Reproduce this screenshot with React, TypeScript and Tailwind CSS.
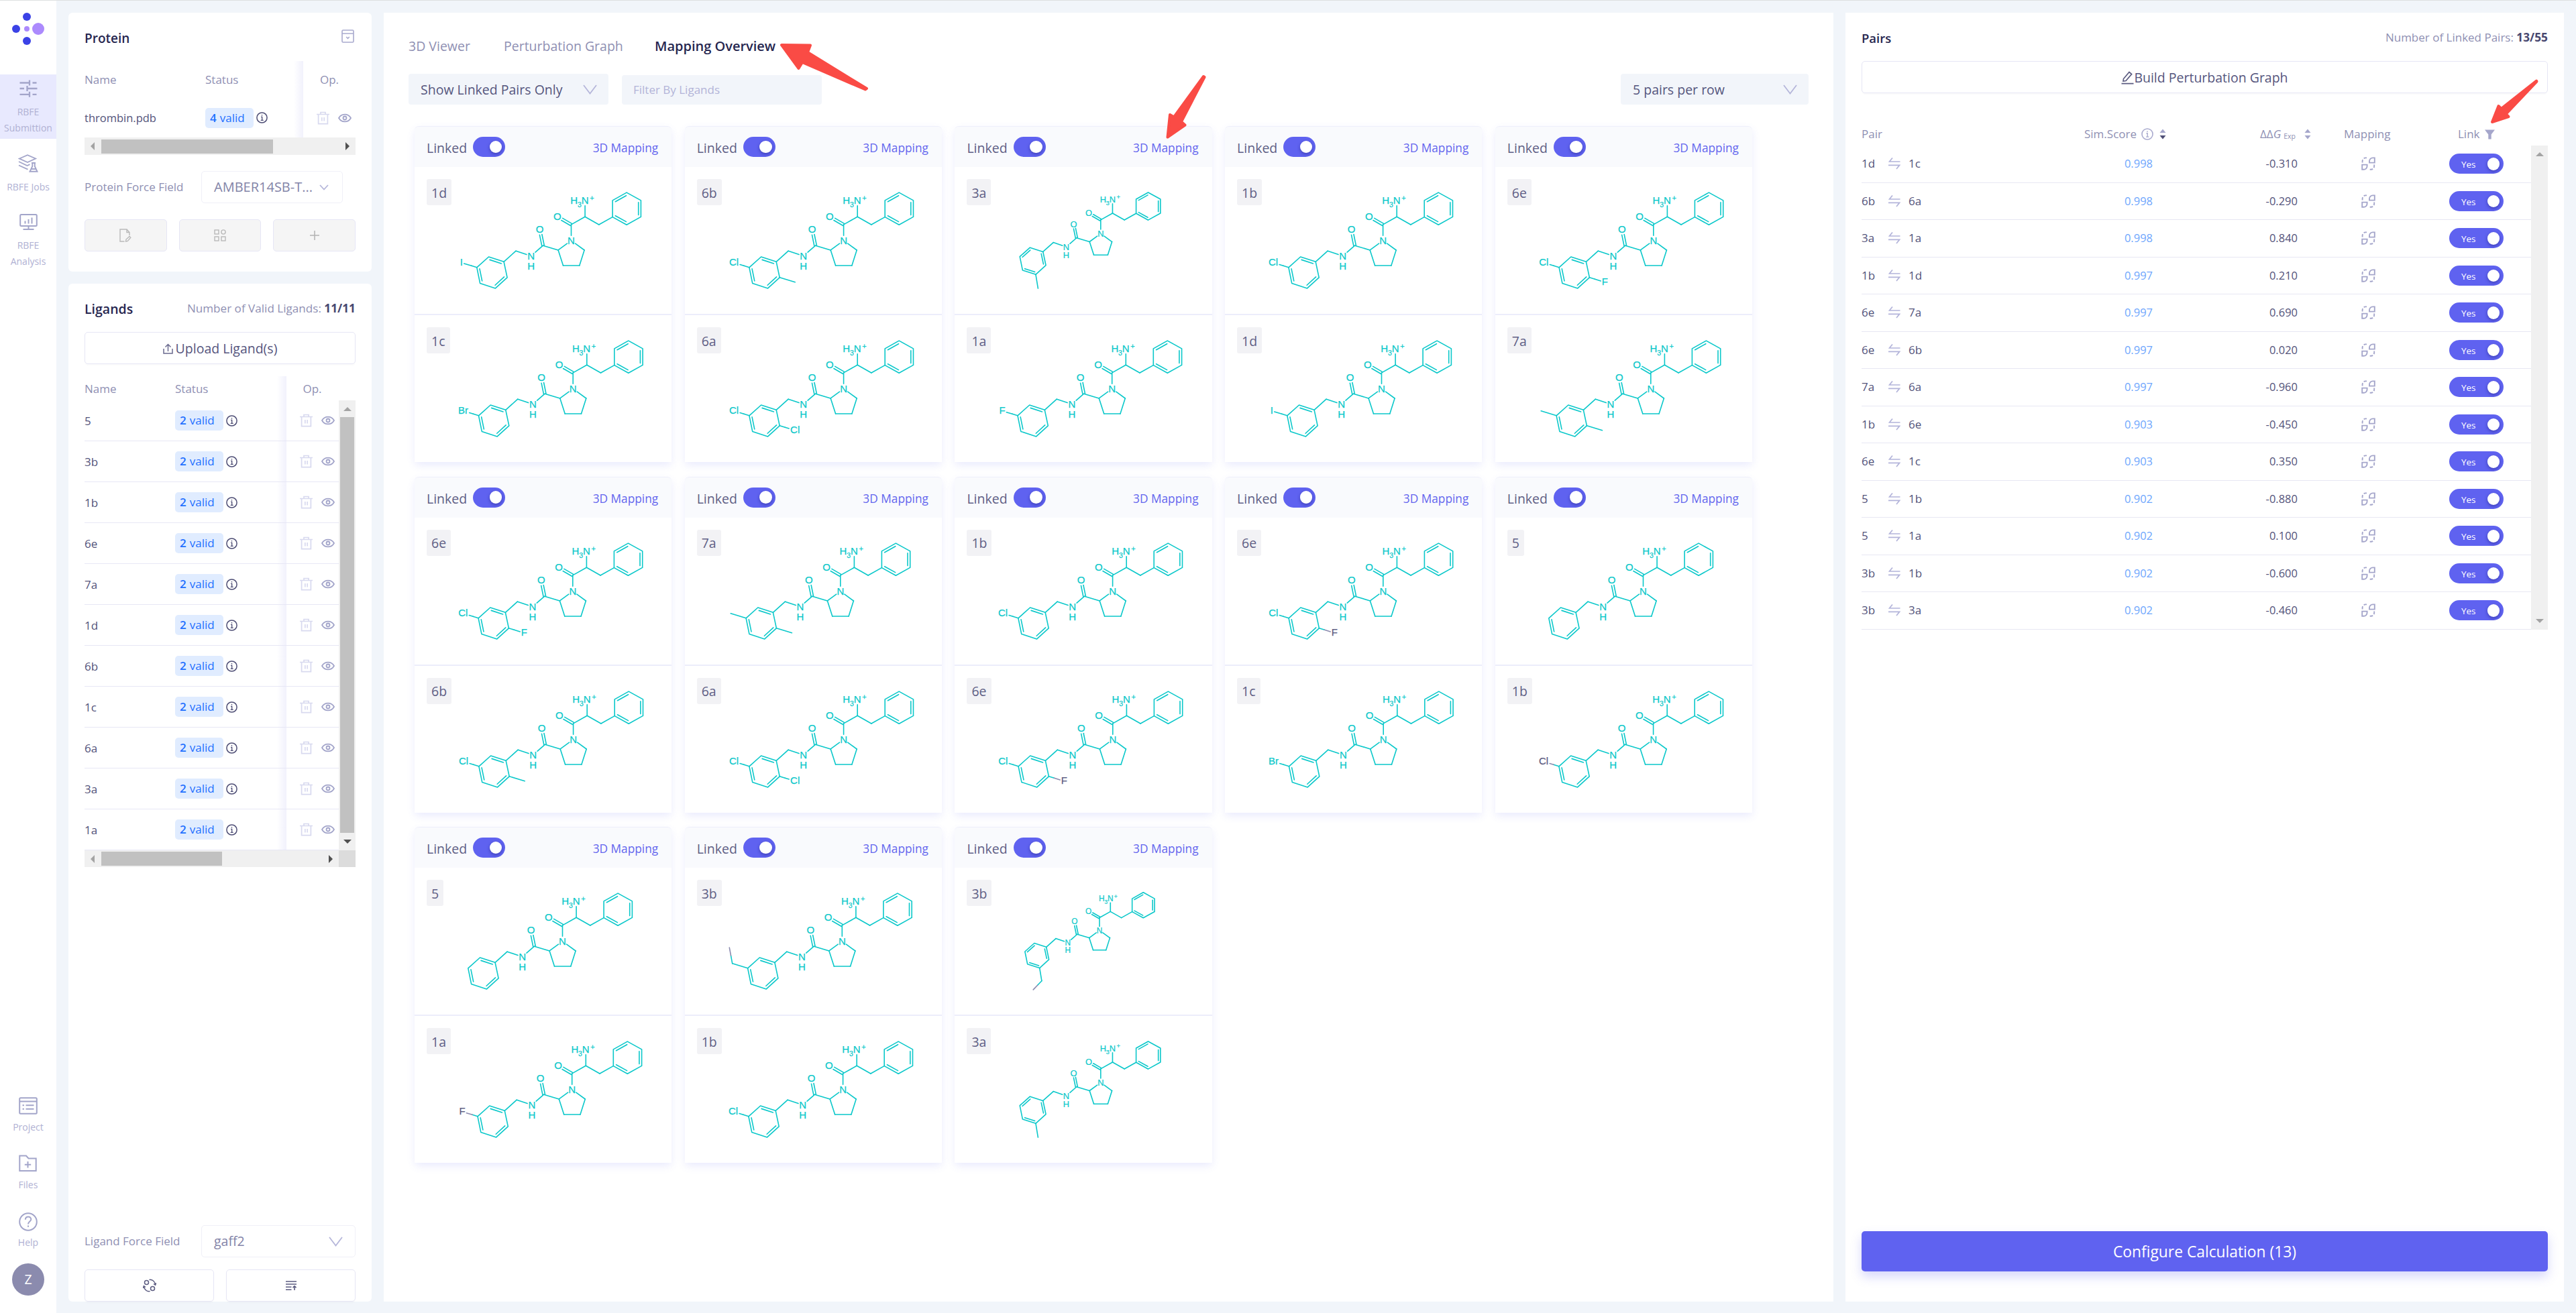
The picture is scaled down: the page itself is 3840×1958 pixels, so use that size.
import type { ReactNode } from "react";
import clsx from "clsx";

/* ---------- molecules ---------- */

type Pt = [number, number];

const TEAL = "#0bc8ca";
const GREY = "#8a8aae";

// 2D coordinates, relative to the pyrrolidine nitrogen
const phenyl: Pt[] = [
  [82.6, -71.7],
  [61.6, -59.9],
  [61.6, -35.2],
  [82.6, -23.6],
  [103.9, -35.4],
  [103.9, -59.9],
];
const ring: Pt[] = [
  [-100.4, 31.5],
  [-123, 24.2],
  [-140.7, 40],
  [-135.9, 63.6],
  [-113, 71.1],
  [-95.4, 55],
];
const N: Pt = [0, 0];
const C2: Pt = [-19.4, 14.1];
const C3: Pt = [-12, 37.2];
const C4: Pt = [12.3, 37.2];
const C5: Pt = [19.6, 14.2];
const CO: Pt = [0, -23.9];
const O1: Pt = [-20.7, -35.8];
const CA: Pt = [20.6, -35.5];
const CB: Pt = [41.3, -23.8];
const NH3: Pt = [20.6, -60];
const CO2: Pt = [-42, 7.4];
const O2: Pt = [-47, -16.8];
const NH: Pt = [-59.9, 23];
const CH2: Pt = [-82.4, 15.4];
const SUB_C: Pt = [-163.6, 33];
const SUB_E: Pt = [-109, 95.3];
const SUB_F: Pt = [-72.4, 62];

function center(points: Pt[]): Pt {
  return [
    points.reduce((s, p) => s + p[0], 0) / points.length,
    points.reduce((s, p) => s + p[1], 0) / points.length,
  ];
}

interface BondProps {
  a: Pt;
  b: Pt;
  from?: number;
  to?: number;
  shift?: number;
  color?: string;
}

function Bond({ a, b, from = 0, to = 0, shift = 0, color = TEAL }: BondProps) {
  const len = Math.hypot(b[0] - a[0], b[1] - a[1]);
  const ux = (b[0] - a[0]) / len;
  const uy = (b[1] - a[1]) / len;
  return (
    <line
      x1={a[0] + ux * from - uy * shift}
      y1={a[1] + uy * from + ux * shift}
      x2={b[0] - ux * to - uy * shift}
      y2={b[1] - uy * to + ux * shift}
      stroke={color}
    />
  );
}

function Ring({ points, doubles }: { points: Pt[]; doubles: number[] }) {
  const c = center(points);
  return (
    <>
      <polygon points={points.map((p) => p.join(",")).join(" ")} />
      {doubles.map((i) => {
        const a = points[i];
        const b = points[(i + 1) % points.length];
        const side = (b[0] - a[0]) * (c[1] - a[1]) - (b[1] - a[1]) * (c[0] - a[0]);
        return <Bond key={i} a={a} b={b} from={2.8} to={2.8} shift={side > 0 ? 3.7 : -3.7} />;
      })}
    </>
  );
}

function Atom({ at, children, size = 15, color = TEAL }: { at: Pt; children: ReactNode; size?: number; color?: string }) {
  return (
    <text
      x={at[0]}
      y={at[1] + size * 0.36}
      fontSize={size}
      fill={color}
      stroke={color}
      strokeWidth={0.25}
      textAnchor="middle"
      fontFamily="'Liberation Sans', Arial, sans-serif"
    >
      {children}
    </text>
  );
}

type Sub = "I" | "Br" | "Cl" | "F" | "Me" | "Et";

interface MoleculeData {
  label: string;
  x: number;
  y?: number;
  scale?: number;
  c?: Sub;
  e?: Sub;
  f?: Sub;
  // substituent that has no counterpart in the mapped ligand
  unmapped?: "c" | "f";
}

function Substituent({ from, at, kind, ethyl, grey }: { from: Pt; at: Pt; kind: Sub; ethyl?: Pt; grey?: boolean }) {
  if (kind === "Me") return <Bond a={from} b={at} />;
  if (kind === "Et" && ethyl) {
    const mid: Pt = [(at[0] + ethyl[0]) / 2, (at[1] + ethyl[1]) / 2];
    return (
      <>
        <Bond a={from} b={at} />
        <Bond a={at} b={mid} />
        <Bond a={mid} b={ethyl} color={GREY} />
      </>
    );
  }
  const trim = kind === "Cl" || kind === "Br" ? 9.5 : kind === "F" ? 6.5 : 4;
  const mid: Pt = [from[0] + (at[0] - from[0]) * 0.35, from[1] + (at[1] - from[1]) * 0.35];
  return (
    <>
      <Bond a={from} b={mid} />
      <Bond a={mid} b={at} to={trim} color={grey ? GREY : TEAL} />
      <Atom at={[at[0], at[1] - 0.7]} color={grey ? "#5b5b80" : TEAL}>
        {kind}
      </Atom>
    </>
  );
}

function Molecule({ x, y = 109.8, scale = 1, c, e, f, unmapped }: MoleculeData) {
  return (
    <svg className="absolute inset-0" width="383" height="219" viewBox="0 0 383 219">
      <g
        transform={`translate(${x} ${y}) scale(${scale})`}
        fill="none"
        stroke={TEAL}
        strokeWidth={1.6 / scale}
        strokeLinecap="round"
        strokeLinejoin="round"
      >
        <Ring points={phenyl} doubles={[0, 2, 4]} />
        <Ring points={ring} doubles={e ? [1, 3, 5] : [0, 2, 4]} />
        <Bond a={CB} b={phenyl[2]} />
        <Bond a={CA} b={CB} />
        <Bond a={CA} b={NH3} to={8} />
        <Bond a={CO} b={CA} />
        <Bond a={CO} b={O1} to={8} shift={1.8} />
        <Bond a={CO} b={O1} to={8} shift={-1.8} />
        <Bond a={CO} b={N} to={7.5} />
        <Bond a={N} b={C2} from={7.5} />
        <Bond a={C2} b={C3} />
        <Bond a={C3} b={C4} />
        <Bond a={C4} b={C5} />
        <Bond a={C5} b={N} to={7.5} />
        <Bond a={C2} b={CO2} />
        <Bond a={CO2} b={O2} to={8} shift={1.8} />
        <Bond a={CO2} b={O2} to={8} shift={-1.8} />
        <Bond a={CO2} b={NH} to={8.5} />
        <Bond a={NH} b={CH2} from={7} />
        <Bond a={CH2} b={ring[0]} />
        {c && <Substituent from={ring[2]} at={SUB_C} kind={c} ethyl={[-168, 9.3]} grey={unmapped === "c"} />}
        {e && <Substituent from={ring[4]} at={SUB_E} kind={e} ethyl={[-125, 112]} />}
        {f && <Substituent from={ring[5]} at={SUB_F} kind={f} grey={unmapped === "f"} />}
        <Atom at={N}>N</Atom>
        <Atom at={O1}>O</Atom>
        <Atom at={O2}>O</Atom>
        <Atom at={NH}>N</Atom>
        <Atom at={[NH[0], NH[1] + 14.6]}>H</Atom>
        <Atom at={NH3}>N</Atom>
        <Atom at={[NH3[0] - 16.5, NH3[1]]}>H</Atom>
        <Atom at={[NH3[0] - 8.3, NH3[1] + 6.4]} size={10.5}>3</Atom>
        <Atom at={[NH3[0] + 10.3, NH3[1] - 3.8]} size={11}>+</Atom>
      </g>
    </svg>
  );
}

const m = {
  "1a": { label: "1a", x: 234.7, c: "F" },
  "1b": { label: "1b", x: 235.6, c: "Cl" },
  "1c": { label: "1c", x: 236.2, c: "Br" },
  "1d": { label: "1d", x: 233.5, c: "I" },
  "3a": { label: "3a", x: 217.8, y: 99.4, scale: 0.857, e: "Me" },
  "3b": { label: "3b", x: 234.3, c: "Et" },
  "5": { label: "5", x: 220.5 },
  "6a": { label: "6a", x: 236.6, c: "Cl", f: "Cl" },
  "6b": { label: "6b", x: 236.6, c: "Cl", f: "Me" },
  "6e": { label: "6e", x: 235.8, c: "Cl", f: "F" },
  "7a": { label: "7a", x: 231.8, c: "Me", f: "Me" },
} satisfies Record<string, MoleculeData>;

const cards: [MoleculeData, MoleculeData][] = [
  [m["1d"], m["1c"]],
  [m["6b"], m["6a"]],
  [m["3a"], m["1a"]],
  [m["1b"], m["1d"]],
  [m["6e"], m["7a"]],
  [m["6e"], m["6b"]],
  [m["7a"], m["6a"]],
  [m["1b"], { ...m["6e"], unmapped: "f" }],
  [{ ...m["6e"], unmapped: "f" }, m["1c"]],
  [m["5"], { ...m["1b"], unmapped: "c" }],
  [m["5"], { ...m["1a"], unmapped: "c" }],
  [m["3b"], m["1b"]],
  [{ label: "3b", x: 216, y: 93.4, scale: 0.79, e: "Et" }, m["3a"]],
];

/* ---------- icons ---------- */

function Svg({ w, h, color, sw = 1.6, className, children }: { w: number; h: number; color: string; sw?: number; className?: string; children: ReactNode }) {
  return (
    <svg
      width={w}
      height={h}
      viewBox={`0 0 ${w} ${h}`}
      fill="none"
      stroke={color}
      strokeWidth={sw}
      className={clsx("shrink-0", className)}
    >
      {children}
    </svg>
  );
}

const TrashIcon = () => (
  <Svg w={19} h={20} color="#d8d9ef" sw={1.7}>
    <path d="M0 4.5H19M6 4V1.5H13V4M2.6 5V18.6H16.4V5M7.8 9V14.5M11.2 9V14.5" />
  </Svg>
);

const EyeIcon = () => (
  <Svg w={20} h={14} color="#a3a5ca" sw={1.8}>
    <path d="M1 7C5 -0.2 15 -0.2 19 7C15 14.2 5 14.2 1 7Z" />
    <circle cx="10" cy="7" r="2.5" />
  </Svg>
);

const InfoIcon = ({ color = "#4f4f76", size = 17 }: { color?: string; size?: number }) => (
  <svg width={size} height={size} viewBox="0 0 17 17" fill="none" stroke={color} strokeWidth="1.5" className="shrink-0">
    <circle cx="8.5" cy="8.5" r="7.6" />
    <path d="M7 7.3H8.7V12.3M6.7 12.4H10.7M8.5 4V5.6" strokeWidth="1.3" />
  </svg>
);

const Chevron = ({ w, h, sw = 1.8 }: { w: number; h: number; sw?: number }) => (
  <Svg w={w} h={h} color="#b5b6da" sw={sw}>
    <path d={`M1 1L${w / 2} ${h - 1.5}L${w - 1} 1`} />
  </Svg>
);

const SwapIcon = () => (
  <Svg w={18} h={18} color="#b3b4da" sw={1.7}>
    <path d="M6 0.5L1.5 6H17.5M0 11.4H16.5L12 17" />
  </Svg>
);

const MappingIcon = () => (
  <Svg w={21} h={20} color="#a5a6cb" sw={1.9}>
    <path d="M12 8.6V6.4A5 5 0 0 1 17 1.4H19.8V8.6ZM1.2 11.6H8.6V13.8A5 5 0 0 1 3.6 18.8H1.2Z" />
    <path d="M1.6 8.6V6.4A5 5 0 0 1 6.2 1.4H8.6M19.2 11.6V13.8A5 5 0 0 1 14.6 18.8H12" strokeDasharray="4.6 2.2" />
  </Svg>
);

const NavIcons = {
  sliders: (
    <Svg w={27} h={26} color="#a3a5ca" sw={2.3}>
      <path d="M0.5 4.5H15M15 0.5V8.5M19.5 4.5H25.5M0.5 13H7M11.5 9V17M11.5 13H26.5M0.5 21.8H15M15 17.8V25.8M19.5 21.8H25.5" />
    </Svg>
  ),
  jobs: (
    <Svg w={30} h={27} color="#a3a5ca" sw={1.9}>
      <path d="M2 6.5L14 1.2L26 6.5L14 12Z" />
      <path d="M1 11L13.5 17L17.5 15.2M1 16.5L14.5 22.6" />
      <path d="M20 13H26M21.3 13V18L17.5 25.8H28.5L24.8 18V13M19.5 22H26.5" />
    </Svg>
  ),
  analysis: (
    <Svg w={27} h={26} color="#a3a5ca" sw={2}>
      <rect x="1.2" y="2" width="24.6" height="17" rx="1.5" />
      <path d="M8.5 11.5V15.5M13.5 9V15.5M18.5 6.5V15.5M13.5 19V23M5.5 24H21.5" />
    </Svg>
  ),
  project: (
    <Svg w={28} h={26} color="#a3a5ca" sw={2}>
      <rect x="1.2" y="1.2" width="25.6" height="23.6" rx="1.5" />
      <path d="M1 6.4H27M5.5 12.3H8M10.5 12.3H22.5M5.5 17.8H8M10.5 17.8H22.5" />
    </Svg>
  ),
  files: (
    <Svg w={27} h={26} color="#a3a5ca" sw={2}>
      <path d="M1.3 24V1.6H11L14.5 5.5H25.7V24ZM13.5 10V19.5M8.8 14.7H18.2" />
    </Svg>
  ),
  help: (
    <Svg w={28} h={28} color="#a3a5ca" sw={2}>
      <circle cx="14" cy="14" r="12.8" />
      <path d="M9.8 10.8C10 4.8 18.5 5.2 18.3 10.5C18.2 13.5 14 13.6 14 17.4M14 19.5V21.8" />
    </Svg>
  ),
};

/* ---------- shared pieces ---------- */

function Switch({ text }: { text?: string }) {
  return (
    <div
      className={clsx(
        "flex h-[30px] items-center justify-end rounded-full bg-[#5f62f0]",
        text ? "w-[81px] gap-[17px] pr-[6px]" : "w-12 pr-[5px]"
      )}
    >
      {text && <span className="pt-0.5 text-[13.5px] text-white">{text}</span>}
      <span className="size-[18.5px] rounded-full bg-white shadow-[0_2px_5px_rgba(0,0,80,0.35)]" />
    </div>
  );
}

function Tag({ count }: { count: number }) {
  return (
    <div className="flex items-center gap-1">
      <span className="flex h-[30px] w-[72px] items-center rounded-[5px] bg-[#e0ecff] pl-[7px] text-[17px] text-[#1f70ff]">
        <b className="mr-[5px] font-semibold">{count}</b>valid
      </span>
      <InfoIcon />
    </div>
  );
}

function FixedShadow() {
  return <div className="ml-auto w-3.5 self-stretch bg-linear-to-r from-white to-[#f1f1fc]" />;
}

const arrowPaths = {
  left: "M6 0V12L0 6Z",
  right: "M0 0V12L6 6Z",
  up: "M0 6H12L6 0Z",
  down: "M0 0H12L6 6Z",
};

function ScrollArrow({ dir, light }: { dir: keyof typeof arrowPaths; light?: boolean }) {
  const upright = dir === "left" || dir === "right";
  return (
    <svg width={upright ? 6 : 12} height={upright ? 12 : 6} fill={light ? "#a3a3a3" : "#505050"}>
      <path d={arrowPaths[dir]} />
    </svg>
  );
}

function OutlineButton({ className, children }: { className?: string; children: ReactNode }) {
  return (
    <button
      className={clsx(
        "flex h-12 items-center justify-center rounded-[5px] border border-[#e6e6f5] text-[19.5px] text-[#55557d]",
        className
      )}
    >
      {children}
    </button>
  );
}

/* ---------- sidebar ---------- */

function NavItem({ icon, lines, active }: { icon: ReactNode; lines: string[]; active?: boolean }) {
  return (
    <div className={clsx("flex w-full flex-col items-center pt-2 pb-1", active && "bg-[#e8e9fe]")}>
      {icon}
      <div className="mt-2.5 text-center text-[14px] leading-6 text-[#b0b1d3]">
        {lines.map((l) => (
          <div key={l}>{l}</div>
        ))}
      </div>
    </div>
  );
}

function Sidebar() {
  return (
    <aside className="flex w-[84px] shrink-0 flex-col items-center bg-white">
      <svg width="84" height="110" className="shrink-0">
        <g fill="#3b42e6">
          <circle cx="40" cy="24" r="6" />
          <circle cx="24" cy="42" r="6" />
          <circle cx="40" cy="60" r="6" />
        </g>
        <g fill="#ac8afd">
          <circle cx="40" cy="42" r="4" />
          <circle cx="57" cy="42" r="9" />
        </g>
      </svg>
      <div className="flex w-full flex-col gap-[15px]">
        <NavItem icon={NavIcons.sliders} lines={["RBFE", "Submittion"]} active />
        <NavItem icon={NavIcons.jobs} lines={["RBFE Jobs"]} />
        <NavItem icon={NavIcons.analysis} lines={["RBFE", "Analysis"]} />
      </div>
      <div className="mt-auto flex flex-col items-center gap-[29px] text-[14px] leading-6 text-[#b0b1d3]">
        {[
          { icon: NavIcons.project, text: "Project" },
          { icon: NavIcons.files, text: "Files" },
          { icon: NavIcons.help, text: "Help" },
        ].map((item) => (
          <div key={item.text} className="flex h-[57px] flex-col items-center justify-between">
            {item.icon}
            <span>{item.text}</span>
          </div>
        ))}
      </div>
      <div className="mt-[19px] mb-[26px] flex size-12 items-center justify-center rounded-full bg-[#8b8bae] text-[19.5px] text-white">
        Z
      </div>
    </aside>
  );
}

/* ---------- left column ---------- */

function ProteinPanel() {
  return (
    <section className="h-[386px] rounded-[6px] bg-white px-6">
      <div className="flex h-[72px] items-center justify-between pt-0.5">
        <h2 className="pt-0.5 text-[19px] font-semibold text-[#26264f]">Protein</h2>
        <Svg w={19} h={20} color="#a9aace" sw={1.6} className="mr-0.5 mb-1">
          <rect x="1" y="1" width="17" height="18" rx="1.5" />
          <path d="M1 6H18M7.2 11L9.5 13.4L11.8 11" />
        </Svg>
      </div>
      <div className="flex h-[55px] items-center text-[#8f90b3]">
        <div className="w-[180px]">Name</div>
        <div className="flex w-[146px] items-center self-stretch">
          Status
          <FixedShadow />
        </div>
        <div className="pl-[25px]">Op.</div>
      </div>
      <div className="flex h-[59px] items-center">
        <div className="w-[180px] text-[16.5px] text-[#53537a]">thrombin.pdb</div>
        <div className="flex w-[146px] items-center self-stretch">
          <Tag count={4} />
          <FixedShadow />
        </div>
        <div className="flex items-center gap-[13px] pl-5">
          <TrashIcon />
          <EyeIcon />
        </div>
      </div>
      <div className="flex h-[26px] items-center bg-[#f0f0f0] pr-[9px] pl-[9px]">
        <ScrollArrow dir="left" light />
        <div className="ml-2.5 h-[21px] w-64 bg-[#c1c1c1]" />
        <div className="ml-auto">
          <ScrollArrow dir="right" />
        </div>
      </div>
      <div className="mt-6 flex h-12 items-center text-[#8f90b3]">
        <span className="w-[174px]">Protein Force Field</span>
        <div className="flex h-12 w-[211px] items-center justify-between rounded-[5px] border border-[#f0f0f8] pr-5 pl-[18px] text-[20px] text-[#8384a8]">
          AMBER14SB-T...
          <Chevron w={14} h={9} />
        </div>
      </div>
      <div className="mt-6 flex gap-[18px]">
        <OutlineButton className="flex-1 bg-[#f5f5f5]">
          <Svg w={18} h={20} color="#b9b9b9" sw={1.4}>
            <path d="M7.5 19H1V1H11L15 5.5V10M11 1V5.5H15M9.5 19L10 16L15 11.5L16.8 13.2L12.3 18.4Z" />
          </Svg>
        </OutlineButton>
        <OutlineButton className="flex-1 bg-[#f5f5f5]">
          <Svg w={18} h={18} color="#b9b9b9" sw={1.4}>
            <rect x="1" y="1" width="6" height="6" />
            <circle cx="14" cy="4" r="3.1" />
            <rect x="1" y="11" width="6" height="6" />
            <rect x="11" y="11" width="6" height="6" />
          </Svg>
        </OutlineButton>
        <OutlineButton className="flex-1 bg-[#f5f5f5]">
          <Svg w={14} h={14} color="#b3b3b3" sw={1.5}>
            <path d="M7 0V14M0 7H14" />
          </Svg>
        </OutlineButton>
      </div>
    </section>
  );
}

const ligands = ["5", "3b", "1b", "6e", "7a", "1d", "6b", "1c", "6a", "3a", "1a"];

function LigandsPanel() {
  return (
    <section className="flex flex-1 flex-col rounded-[6px] bg-white px-6">
      <div className="flex h-[72px] shrink-0 items-center justify-between">
        <h2 className="pt-1 text-[19.5px] font-semibold text-[#26264f]">Ligands</h2>
        <div className="pt-0.5 text-[17.1px] text-[#8f90b3]">
          Number of Valid Ligands: <b className="text-[17.3px] font-bold text-[#47476f]">11/11</b>
        </div>
      </div>
      <OutlineButton className="shrink-0 pt-0.5 shadow-[0_2px_2px_rgba(0,0,0,0.02)]">
        <Svg w={15} h={16} color="#6a6a8e" sw={1.5} className="mr-1">
          <path d="M1 8V15H14V8M7.5 12V1.5M3.5 5.5L7.5 1.5L11.5 5.5" />
        </Svg>
        Upload Ligand(s)
      </OutlineButton>
      <div className="mt-[18px] flex h-9 shrink-0 items-center text-[#8f90b3]">
        <div className="w-[135px] pt-0.5">Name</div>
        <div className="flex w-[165.5px] items-center self-stretch">
          <span className="pt-0.5">Status</span>
          <FixedShadow />
        </div>
        <div className="pt-0.5 pl-[25px]">Op.</div>
      </div>
      <div className="flex shrink-0">
        <div className="w-[379px]">
          {ligands.map((name) => (
            <div key={name} className="flex h-[61px] items-center border-b border-[#e7e7f5]">
              <div className="w-[135px] pt-0.5 text-[#53537a]">{name}</div>
              <div className="flex w-[165.5px] items-center self-stretch">
                <Tag count={2} />
                <FixedShadow />
              </div>
              <div className="flex items-center gap-[13px] pl-5">
                <TrashIcon />
                <EyeIcon />
              </div>
            </div>
          ))}
        </div>
        <div className="flex w-[25px] flex-col items-center bg-[#f0f0f0] pt-2.5 pb-2.5">
          <ScrollArrow dir="up" light />
          <div className="mt-[9px] h-[620px] w-[21px] bg-[#c1c1c1]" />
          <div className="mt-auto">
            <ScrollArrow dir="down" />
          </div>
        </div>
      </div>
      <div className="flex h-[25px] shrink-0">
        <div className="flex w-[379px] items-center bg-[#f0f0f0] px-[9px]">
          <ScrollArrow dir="left" light />
          <div className="ml-2.5 h-[21px] w-[180px] bg-[#c1c1c1]" />
          <div className="ml-auto">
            <ScrollArrow dir="right" />
          </div>
        </div>
        <div className="w-[25px] bg-[#dcdcdc]" />
      </div>
      <div className="mt-auto flex items-center text-[#8f90b3]">
        <span className="w-[174px] shrink-0">Ligand Force Field</span>
        <div className="flex h-12 flex-1 items-center justify-between rounded-[5px] border border-[#f0f0f8] pr-[18px] pl-[18px] text-[19.5px] text-[#8384a8]">
          gaff2
          <Chevron w={21} h={15} />
        </div>
      </div>
      <div className="mt-[18px] flex gap-[18px]">
        <OutlineButton className="flex-1 shadow-[0_2px_2px_rgba(0,0,0,0.02)]">
          <Svg w={20} h={20} color="#5b5b80" sw={1.5}>
            <circle cx="5.5" cy="5.5" r="3" />
            <circle cx="14.5" cy="14.5" r="3" />
            <path d="M9.5 1.4C14 0.6 18 4 18.6 9M16 7.5L18.6 9.4L19.6 6.2M10.5 18.6C6 19.4 2 16 1.4 11M4 12.5L1.4 10.6L0.4 13.8" />
          </Svg>
        </OutlineButton>
        <OutlineButton className="flex-1 shadow-[0_2px_2px_rgba(0,0,0,0.02)]">
          <Svg w={16} h={16} color="#5b5b80" sw={1.6}>
            <path d="M0 2H16M0 6H16M0 10.3H8.5M0 14.3H8.5M13 15V9M10.5 11.2L13 8.8L15.5 11.2" />
          </Svg>
        </OutlineButton>
      </div>
    </section>
  );
}

/* ---------- mapping overview ---------- */

function MappingCell({ data, first }: { data: MoleculeData; first?: boolean }) {
  return (
    <div className={clsx("relative pt-[18px] pl-[18px]", first ? "h-[221px] border-b-2 border-[#ecedfb]" : "h-[219px]")}>
      <span className="inline-flex h-[39px] items-center rounded-[3px] bg-[#f2f2f5] px-[7px] pt-0.5 text-[19.5px] text-[#5f5f85]">
        {data.label}
      </span>
      <Molecule {...data} />
    </div>
  );
}

function MappingCard({ pair }: { pair: [MoleculeData, MoleculeData] }) {
  return (
    <article className="rounded-t-[6px] bg-white shadow-[0_5px_13px_-1px_rgba(95,98,240,0.14)]">
      <header className="flex h-[61px] items-center rounded-t-[6px] border-t border-[#eeeffb] bg-[#f9fafd] px-[18px]">
        <span className="pt-1 text-[19.5px] text-[#5f5f85]">Linked</span>
        <div className="ml-[9px]">
          <Switch />
        </div>
        <span className="ml-auto pt-1 pr-0.5 text-[17.3px] text-[#6466ee]">3D Mapping</span>
      </header>
      <MappingCell data={pair[0]} first />
      <MappingCell data={pair[1]} />
    </article>
  );
}

function Overview() {
  return (
    <main className="w-[2161px] bg-white pr-[37px] pl-[37px]">
      <nav className="flex h-[91px] gap-[48px] pt-9 text-[19.5px] leading-7 whitespace-nowrap text-[#8f90b3]">
        <span className="w-[94px]">3D Viewer</span>
        <span className="w-[177px]">Perturbation Graph</span>
        <span className="text-[20px] font-semibold text-[#26264f]">Mapping Overview</span>
      </nav>
      <div className="flex h-[46px] gap-5 text-[19.5px] text-[#55557d]">
        <div className="flex w-[298px] items-center justify-between rounded-[4px] bg-[#f2f5fa] pr-[17px] pl-[18px]">
          <span className="pt-0.5">Show Linked Pairs Only</span>
          <Chevron w={21} h={15} />
        </div>
        <div className="mt-0.5 flex w-[298px] items-center rounded-[4px] bg-[#f2f5fa] pl-[17px] text-[17px] text-[#b3b4d8]">
          Filter By Ligands
        </div>
        <div className="ml-auto flex w-[280px] items-center justify-between rounded-[4px] bg-[#f2f5fa] pr-[17px] pl-[18px]">
          <span className="pt-0.5">5 pairs per row</span>
          <Chevron w={21} h={15} />
        </div>
      </div>
      <div className="mt-8 ml-[9px] grid w-[1994px] grid-cols-5 gap-x-[19.5px] gap-y-[21.5px]">
        {cards.map((pair, i) => (
          <MappingCard key={i} pair={pair} />
        ))}
      </div>
    </main>
  );
}

/* ---------- pairs ---------- */

const pairs = [
  { a: "1d", b: "1c", score: "0.998", ddg: "-0.310" },
  { a: "6b", b: "6a", score: "0.998", ddg: "-0.290" },
  { a: "3a", b: "1a", score: "0.998", ddg: "0.840" },
  { a: "1b", b: "1d", score: "0.997", ddg: "0.210" },
  { a: "6e", b: "7a", score: "0.997", ddg: "0.690" },
  { a: "6e", b: "6b", score: "0.997", ddg: "0.020" },
  { a: "7a", b: "6a", score: "0.997", ddg: "-0.960" },
  { a: "1b", b: "6e", score: "0.903", ddg: "-0.450" },
  { a: "6e", b: "1c", score: "0.903", ddg: "0.350" },
  { a: "5", b: "1b", score: "0.902", ddg: "-0.880" },
  { a: "5", b: "1a", score: "0.902", ddg: "0.100" },
  { a: "3b", b: "1b", score: "0.902", ddg: "-0.600" },
  { a: "3b", b: "3a", score: "0.902", ddg: "-0.460" },
];

function Sorter({ desc }: { desc?: boolean }) {
  return (
    <svg width="10" height="16" className="shrink-0">
      <path d="M0.5 6L5 0.5L9.5 6Z" fill="#a5a6cb" />
      <path d="M0.5 10L5 15.5L9.5 10Z" fill={desc ? "#4f4f76" : "#a5a6cb"} />
    </svg>
  );
}

function PairsPanel() {
  return (
    <section className="flex w-[1071px] flex-col bg-white px-6">
      <div className="flex h-[72px] items-center justify-between">
        <h2 className="pt-1 text-[18.5px] font-semibold text-[#26264f]">Pairs</h2>
        <div className="pt-0.5 text-[#8f90b3]">
          Number of Linked Pairs: <b className="text-[17.3px] font-bold text-[#47476f]">13/55</b>
        </div>
      </div>
      <OutlineButton className="pt-0.5 shadow-[0_2px_2px_rgba(0,0,0,0.02)]">
        <Svg w={19} h={20} color="#5b5b80" sw={1.7}>
          <path d="M0.5 18.6H18.5M3 15L3.5 11.5L12 1.5L15.6 4.6L7 14.5Z" />
        </Svg>
        Build Perturbation Graph
      </OutlineButton>
      <div className="mt-11 grid h-[34px] grid-cols-[332px_262px_125px_157px_146px] items-center text-[#8f90b3]">
        <span>Pair</span>
        <span className="flex items-center">
          Sim.Score
          <span className="ml-[7px] flex items-center gap-[9px]">
            <InfoIcon color="#a9aace" size={18} />
            <Sorter desc />
          </span>
        </span>
        <span className="flex items-center">
          ΔΔ<i>G</i>
          <span className="mt-1.5 ml-1 text-[10.5px]">Exp</span>
          <span className="ml-[13px]">
            <Sorter />
          </span>
        </span>
        <span>Mapping</span>
        <span className="flex items-center gap-[7px] pl-[13px]">
          Link
          <svg width="15" height="15" fill="#a5a6cb">
            <path d="M0 0.5H15L9.7 7.5V14.5H5.3V7.5Z" />
          </svg>
        </span>
      </div>
      <div className="flex">
        <div className="w-[998px]">
          {pairs.map((p, i) => (
            <div
              key={i}
              className="grid h-[55.5px] grid-cols-[332px_262px_125px_157px_122px] items-center border-b border-[#e7e7f3] text-[#53537a]"
            >
              <div className="flex items-center">
                <span className="w-10">{p.a}</span>
                <SwapIcon />
                <span className="ml-3">{p.b}</span>
              </div>
              <span className="w-[102px] text-right text-[16.5px] text-[#6ea6fd]">{p.score}</span>
              <span className="w-14 text-right text-[16.5px]">{p.ddg}</span>
              <div className="pl-[26px]">
                <MappingIcon />
              </div>
              <Switch text="Yes" />
            </div>
          ))}
        </div>
        <div className="flex flex-1 flex-col items-center justify-between bg-[#f0f0f0] py-2.5">
          <ScrollArrow dir="up" light />
          <ScrollArrow dir="down" light />
        </div>
      </div>
      <button className="mt-auto mb-[45px] h-[60px] rounded-[5px] bg-[#5f62f0] pt-0.5 text-[22.8px] text-white shadow-[0_8px_16px_rgba(95,98,240,0.25)]">
        Configure Calculation (13)
      </button>
    </section>
  );
}

// Red pointer arrows drawn on top of the screen
function Annotations() {
  return (
    <svg
      className="pointer-events-none absolute inset-0"
      width="3840"
      height="1958"
      fill="#fa4b45"
      stroke="#fa4b45"
      strokeWidth="4"
      strokeLinejoin="round"
    >
      <polygon points="1165,66 1208,66.5 1204,77 1292,131 1290,132.5 1196,92 1190.5,101" />
      <polygon points="1740.5,203.5 1744,170 1750,173.5 1794,113 1795.5,114 1761,180.5 1766.5,185.5" />
      <polygon points="3715,181 3724.5,157 3728.5,161 3781,119.5 3781.5,120.5 3735.5,169 3739.5,173" />
    </svg>
  );
}

export default function App() {
  return (
    <div className="relative flex h-[1958px] w-[3840px] overflow-hidden border-t border-[#dde0e0] bg-[#f1f5fa] font-['Open_Sans','Noto_Sans',sans-serif] text-[17px] leading-6">
      <Sidebar />
      <div className="flex gap-[18px] pt-[18px] pb-[17px] pl-[18px]">
        <div className="flex w-[452px] flex-col gap-[18px]">
          <ProteinPanel />
          <LigandsPanel />
        </div>
        <Overview />
        <PairsPanel />
      </div>
      <Annotations />
    </div>
  );
}
